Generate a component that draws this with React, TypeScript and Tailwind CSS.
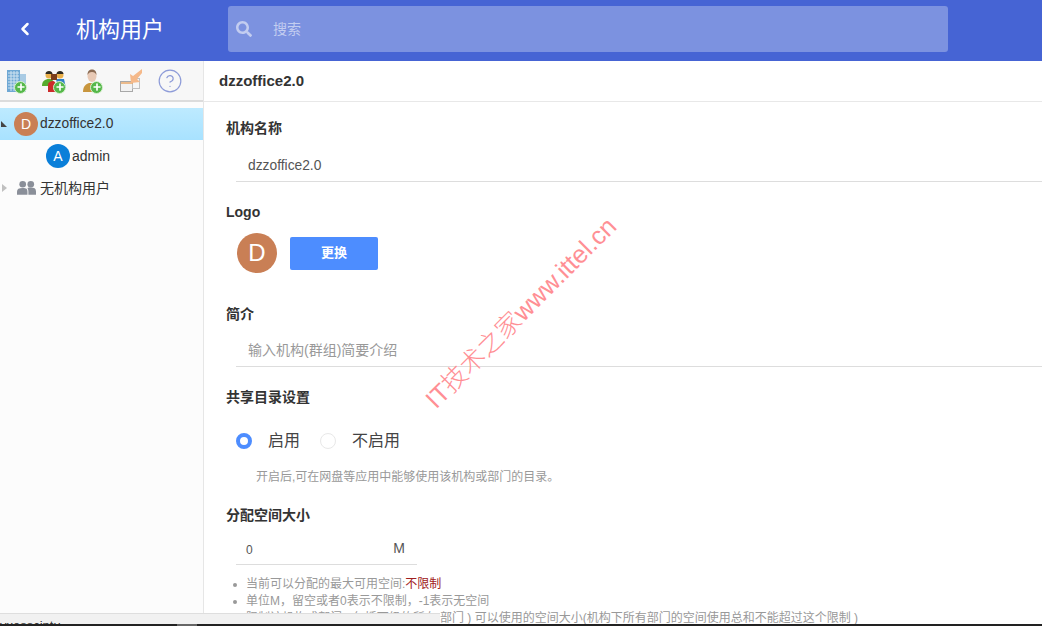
import React from 'react';
import { ChevronLeft, CircleHelp, Plus } from 'lucide-react';
import { FaSearch } from 'react-icons/fa';

const font = "font-['Liberation_Sans','Noto_Sans_CJK_SC',sans-serif]";

const AddBadge = () => (
  <span className="absolute right-0 bottom-[-1px] flex h-[13px] w-[13px] items-center justify-center rounded-full border border-[#d8f0d0] bg-[#55b84a]">
    <Plus size={10} strokeWidth={4} color="#ffffff" />
  </span>
);

const Toolbar = () => (
  <div className="flex h-[41px] items-center border-b-2 border-[#dcdcdc] bg-[#f7f7f7] pl-[7px]">
    {/* org */}
    <div className="relative h-[24px] w-[20px] shrink-0">
      <svg width="20" height="24" viewBox="0 0 20 24">
        <rect x="0" y="1" width="13" height="22" fill="#6fa8d4" />
        <rect x="13" y="5" width="6" height="18" fill="#a9cbe4" />
        <path d="M1 4h11M1 7h11M1 10h11M1 13h11M1 16h11M1 19h11M4 2v20M7 2v20M10 2v20" stroke="#cfe3f1" strokeWidth="1" />
      </svg>
      <AddBadge />
    </div>
    {/* group */}
    <div className="relative ml-[15px] h-[24px] w-[24px] shrink-0">
      <svg width="24" height="24" viewBox="0 0 24 24">
        <circle cx="7" cy="6" r="3.500" fill="#eab04a" />
        <circle cx="18" cy="6" r="3.500" fill="#eab04a" />
        <path d="M3.500 5c0-4 7-4 7 0zM14.500 5c0-4 7-4 7 0z" fill="#2e2a22" />
        <path d="M0 17c0-5 3-7 7-7s5 2 5 7z" fill="#57ab2e" />
        <path d="M14 10h8l2 9h-8z" fill="#2f80c8" />
        <path d="M6 23v-7c0-3 3-4 5-4s3 3 3 5v6z" fill="#cc2b2b" />
        <rect x="9" y="5" width="6" height="6" fill="#7a3d1c" />
      </svg>
      <AddBadge />
    </div>
    {/* user */}
    <div className="relative ml-[17px] h-[24px] w-[20px] shrink-0">
      <svg width="20" height="24" viewBox="0 0 20 24">
        <ellipse cx="9" cy="7" rx="4.500" ry="6" fill="#e8c9b5" />
        <path d="M4.500 6c0-4 2-5.500 4.500-5.500s4.500 1.500 4.500 5.500c-1-2-2-3-4.500-3s-3.500 1-4.500 3z" fill="#8a6a52" />
        <path d="M0 23c0-6 3-8 6-9h6c3 1 6 3 6 9z" fill="#c8963e" />
      </svg>
      <AddBadge />
    </div>
    {/* move */}
    <div className="ml-[17px] h-[24px] w-[22px] shrink-0">
      <svg width="22" height="24" viewBox="0 0 22 24">
        <rect x="0.500" y="12.500" width="12" height="10" fill="#f2f2f2" stroke="#a8a8a8" />
        <rect x="12.500" y="9.500" width="7" height="10" fill="#f5f5f5" stroke="#c0c0c0" />
        <path d="M1 14h12" stroke="#e8a86a" strokeWidth="1.500" />
        <path d="M22 0 13 7l-3-2 1 9 9-1-3-3 5-6z" fill="#f5b98a" />
      </svg>
    </div>
    <CircleHelp className="ml-[15px] shrink-0" size={26} strokeWidth={1.100} color="#8d9bd8" />
  </div>
);

const Avatar = ({ letter, color, className }: { letter: string; color: string; className: string }) => (
  <span className={`flex items-center justify-center rounded-full text-white ${color} ${className}`}>{letter}</span>
);

const Sidebar = () => (
  <aside className="w-[204px] shrink-0 border-r border-[#e6e6e6] bg-[#fcfcfc]">
    <Toolbar />
    <div className="pt-[6px] text-[14px] text-[#333333]">
      <div className="flex h-[32px] items-center bg-gradient-to-b from-[#bdeaff] to-[#a8e2ff]">
        <span className="ml-[1px] h-0 w-0 border-t-[6px] border-l-[6px] border-t-transparent border-l-[#444444]" />
        <Avatar letter="D" color="bg-[#c97f55]" className="ml-[7px] h-[24px] w-[24px] text-[14px]" />
        <span className="ml-[2px] text-[13.800px]">dzzoffice2.0</span>
      </div>
      <div className="flex h-[32px] items-center pl-[46px]">
        <Avatar letter="A" color="bg-[#0a7fd9]" className="h-[24px] w-[24px] text-[14px]" />
        <span className="ml-[2px]">admin</span>
      </div>
      <div className="flex h-[32px] items-center">
        <span className="ml-[2px] h-0 w-0 border-y-[4px] border-l-[5px] border-y-transparent border-l-[#c0c0c0]" />
        <svg className="ml-[10px]" width="19" height="16" viewBox="0 0 20 16">
          <circle cx="6" cy="4" r="3.500" fill="#8a8f99" />
          <circle cx="14.500" cy="4" r="3.500" fill="#8a8f99" />
          <path d="M0 15v-3c0-3 2-4 6-4s5 1 5 4v3zM12 15v-3c0-2-.5-3-1-4 1-.3 2-.4 3.500-.4 3.500 0 5.500 1 5.500 4v3.400z" fill="#8a8f99" />
        </svg>
        <span className="ml-[4px]">无机构用户</span>
      </div>
    </div>
  </aside>
);

const Label = ({ children, className = '' }: { children: React.ReactNode; className?: string }) => (
  <div className={`text-[14px] leading-[18px] font-bold text-[#333333] ${className}`}>{children}</div>
);

const Watermark = () => (
  <div className="pointer-events-none absolute top-[313px] left-[521px] -translate-x-1/2 -translate-y-1/2 -rotate-45 text-[25.300px] leading-none font-light whitespace-nowrap text-[#ff8f94]">
    IT技术之家www.ittel.cn
  </div>
);

const Main = () => (
  <main className="min-w-0 flex-1 bg-white">
    <div className="flex h-[41px] items-center border-b border-[#e8e8e8] pl-[15px] text-[15px] font-bold text-[#333333]">
      dzzoffice2.0
    </div>
    <div className="pt-[17px] pl-[22px]">
      <Label>机构名称</Label>
      <div className="mt-[11px] ml-[10px] flex h-[34px] items-center border-b border-[#dddddd] pt-[3px] pl-[12px] text-[13.800px] text-[#555555]">
        dzzoffice2.0
      </div>

      <Label className="mt-[21px]">Logo</Label>
      <div className="mt-[12px] ml-[11px] flex items-center">
        <Avatar letter="D" color="bg-[#c97f55]" className="h-[40px] w-[40px] text-[24px]" />
        <button className="ml-[13px] h-[33px] w-[88px] rounded-[2px] bg-[#4d8dff] text-[13px] font-bold text-white">更换</button>
      </div>

      <Label className="mt-[32px]">简介</Label>
      <div className="mt-[9px] ml-[10px] flex h-[35px] items-center border-b border-[#dddddd] pt-[2px] pl-[12px] text-[14px] text-[#999999]">
        输入机构(群组)简要介绍
      </div>

      <Label className="mt-[21px]">共享目录设置</Label>
      <div className="mt-[20px] ml-[10px] flex h-[30px] items-center text-[16px] text-[#444444]">
        <span className="h-[16px] w-[16px] rounded-full border-[4px] border-[#4d8dff] bg-white" />
        <span className="ml-[16px]">启用</span>
        <span className="ml-[20px] h-[16px] w-[16px] rounded-full border border-[#e8e8e8] bg-white" />
        <span className="ml-[16px]">不启用</span>
      </div>
      <div className="mt-[12px] ml-[30px] text-[12px] leading-[18px] text-[#999999]">
        开启后,可在网盘等应用中能够使用该机构或部门的目录。
      </div>

      <Label className="mt-[20px]">分配空间大小</Label>
      <div className="mt-[8px] ml-[10px] flex h-[33px] w-[181px] items-center border-b border-[#dddddd] pr-[12px] pl-[10px] text-[#555555]">
        <span className="pt-[4px] text-[12px]">0</span>
        <span className="ml-auto text-[14px]">M</span>
      </div>
      <ul className="mt-[11px] ml-[7px] text-[12px] leading-[17px] text-[#999999]">
        {[
          <>当前可以分配的最大可用空间:<span className="text-[#a02020]">不限制</span></>,
          <>单位M，留空或者0表示不限制，-1表示无空间</>,
          <>限制该机构或部门 ( 包括下级的所有 部门 ) 可以使用的空间大小(机构下所有部门的空间使用总和不能超过这个限制 )</>,
        ].map((item, i) => (
          <li key={i} className="flex items-center whitespace-nowrap">
            <span className="mr-[9px] h-[4px] w-[4px] rounded-full bg-[#999999]" />
            <span>{item}</span>
          </li>
        ))}
      </ul>
    </div>
    <Watermark />
  </main>
);

export default function App() {
  return (
    <div className={`relative flex h-[626px] w-[1042px] flex-col overflow-hidden bg-white ${font}`}>
      <header className="flex h-[61px] shrink-0 items-center bg-[#4664d4]">
        <ChevronLeft className="mb-[3px] ml-[15px]" size={20} strokeWidth={3} color="#ffffff" />
        <h1 className="mb-[3px] ml-[41px] text-[22px] text-white">机构用户</h1>
        <div className="mb-[3px] ml-[64px] flex h-[46px] w-[720px] items-center rounded-[3px] bg-[#7c92e0]">
          <FaSearch className="ml-[8px]" size={16} color="#c3cdf0" />
          <span className="ml-[21px] text-[14px] text-[#c3cdf0]">搜索</span>
        </div>
      </header>
      <div className="flex min-h-0 flex-1">
        <Sidebar />
        <Main />
      </div>
      {/* clipped window strip at the bottom */}
      <div className="absolute right-0 bottom-0 left-0 h-[13px]">
        <div className="h-[11px] w-[440px] overflow-hidden border-t border-[#dedede] bg-[#f1f1f1] pt-[5px] text-[13px] leading-[14px] text-[#333333]">
          vxesscintu
        </div>
        <div className="flex h-[2px] bg-[#222222]">
          <span className="ml-[177px] h-[2px] w-[20px] bg-[#666666]" />
        </div>
      </div>
    </div>
  );
}
